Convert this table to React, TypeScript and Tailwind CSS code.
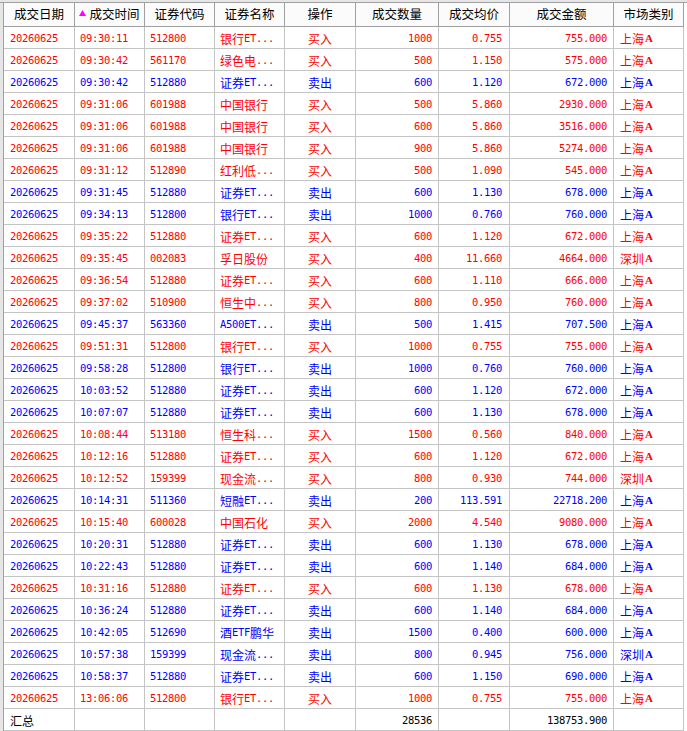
import React from "react";

// 成交记录（当日成交）
type Deal = {
  time: string;
  code: string;
  name: string;
  buy: boolean;
  qty: string;
  price: string;
  amount: string;
  market: string;
};

const deals: Deal[] = [
  { time: "09:30:11", code: "512800", name: "银行ET...", buy: true, qty: "1000", price: "0.755", amount: "755.000", market: "上海" },
  { time: "09:30:42", code: "561170", name: "绿色电...", buy: true, qty: "500", price: "1.150", amount: "575.000", market: "上海" },
  { time: "09:30:42", code: "512880", name: "证券ET...", buy: false, qty: "600", price: "1.120", amount: "672.000", market: "上海" },
  { time: "09:31:06", code: "601988", name: "中国银行", buy: true, qty: "500", price: "5.860", amount: "2930.000", market: "上海" },
  { time: "09:31:06", code: "601988", name: "中国银行", buy: true, qty: "600", price: "5.860", amount: "3516.000", market: "上海" },
  { time: "09:31:06", code: "601988", name: "中国银行", buy: true, qty: "900", price: "5.860", amount: "5274.000", market: "上海" },
  { time: "09:31:12", code: "512890", name: "红利低...", buy: true, qty: "500", price: "1.090", amount: "545.000", market: "上海" },
  { time: "09:31:45", code: "512880", name: "证券ET...", buy: false, qty: "600", price: "1.130", amount: "678.000", market: "上海" },
  { time: "09:34:13", code: "512800", name: "银行ET...", buy: false, qty: "1000", price: "0.760", amount: "760.000", market: "上海" },
  { time: "09:35:22", code: "512880", name: "证券ET...", buy: true, qty: "600", price: "1.120", amount: "672.000", market: "上海" },
  { time: "09:35:45", code: "002083", name: "孚日股份", buy: true, qty: "400", price: "11.660", amount: "4664.000", market: "深圳" },
  { time: "09:36:54", code: "512880", name: "证券ET...", buy: true, qty: "600", price: "1.110", amount: "666.000", market: "上海" },
  { time: "09:37:02", code: "510900", name: "恒生中...", buy: true, qty: "800", price: "0.950", amount: "760.000", market: "上海" },
  { time: "09:45:37", code: "563360", name: "A500ET...", buy: false, qty: "500", price: "1.415", amount: "707.500", market: "上海" },
  { time: "09:51:31", code: "512800", name: "银行ET...", buy: true, qty: "1000", price: "0.755", amount: "755.000", market: "上海" },
  { time: "09:58:28", code: "512800", name: "银行ET...", buy: false, qty: "1000", price: "0.760", amount: "760.000", market: "上海" },
  { time: "10:03:52", code: "512880", name: "证券ET...", buy: false, qty: "600", price: "1.120", amount: "672.000", market: "上海" },
  { time: "10:07:07", code: "512880", name: "证券ET...", buy: false, qty: "600", price: "1.130", amount: "678.000", market: "上海" },
  { time: "10:08:44", code: "513180", name: "恒生科...", buy: true, qty: "1500", price: "0.560", amount: "840.000", market: "上海" },
  { time: "10:12:16", code: "512880", name: "证券ET...", buy: true, qty: "600", price: "1.120", amount: "672.000", market: "上海" },
  { time: "10:12:52", code: "159399", name: "现金流...", buy: true, qty: "800", price: "0.930", amount: "744.000", market: "深圳" },
  { time: "10:14:31", code: "511360", name: "短融ET...", buy: false, qty: "200", price: "113.591", amount: "22718.200", market: "上海" },
  { time: "10:15:40", code: "600028", name: "中国石化", buy: true, qty: "2000", price: "4.540", amount: "9080.000", market: "上海" },
  { time: "10:20:31", code: "512880", name: "证券ET...", buy: false, qty: "600", price: "1.130", amount: "678.000", market: "上海" },
  { time: "10:22:43", code: "512880", name: "证券ET...", buy: false, qty: "600", price: "1.140", amount: "684.000", market: "上海" },
  { time: "10:31:16", code: "512880", name: "证券ET...", buy: true, qty: "600", price: "1.130", amount: "678.000", market: "上海" },
  { time: "10:36:24", code: "512880", name: "证券ET...", buy: false, qty: "600", price: "1.140", amount: "684.000", market: "上海" },
  { time: "10:42:05", code: "512690", name: "酒ETF鹏华", buy: false, qty: "1500", price: "0.400", amount: "600.000", market: "上海" },
  { time: "10:57:38", code: "159399", name: "现金流...", buy: false, qty: "800", price: "0.945", amount: "756.000", market: "深圳" },
  { time: "10:58:37", code: "512880", name: "证券ET...", buy: false, qty: "600", price: "1.150", amount: "690.000", market: "上海" },
  { time: "13:06:06", code: "512800", name: "银行ET...", buy: true, qty: "1000", price: "0.755", amount: "755.000", market: "上海" },
];

const headers = ["成交日期", "成交时间", "证券代码", "证券名称", "操作", "成交数量", "成交均价", "成交金额", "市场类别"];

// 每列宽度（含右边框）
const W = ["w-[71px]", "w-[70px]", "w-[70px]", "w-[70px]", "w-[71px]", "w-[83px]", "w-[71px]", "w-[104px]", "w-[70px]"];

const mono = "font-['DejaVu_Sans_Mono'] text-[10.5px] tracking-[-0.32px]";

// 半角字符用等宽字体，汉字用黑体
function Mixed({ text }: { text: string }) {
  const parts = text.match(/[\x00-\x7f]+|[^\x00-\x7f]+/g) ?? [];
  return (
    <>
      {parts.map((p, i) =>
        /^[\x00-\x7f]/.test(p) ? (
          <span key={i} className={mono}>{p}</span>
        ) : (
          <span key={i}>{p}</span>
        )
      )}
    </>
  );
}

const cell = "h-full flex items-center pt-[2px] border-r border-[#c4c4c4] whitespace-nowrap overflow-hidden";

export default function App() {
  return (
    <div className="w-[687px] h-[731px] overflow-hidden bg-white flex flex-col font-['Noto_Sans_CJK_SC',sans-serif] text-[12px] leading-none">
      <div className="h-[3px] shrink-0 bg-[#e6e6e6] border-b border-[#a0a0a0]" />
      <div className="flex flex-1">
        <div className="w-[4px] shrink-0 bg-[#e6e6e6] border-r border-[#a0a0a0]" />
        <div className="w-[680px] shrink-0">
          {/* 表头 */}
          <div className="flex h-[24px] border-b border-[#a0a0a0] bg-[#fbfbfb] text-black text-[12.5px]">
            {headers.map((h, i) => (
              <div key={h} className={`${W[i]} h-full flex items-center justify-center border-r border-[#a0a0a0]`}>
                {i === 1 && (
                  <svg width="7" height="6" viewBox="0 0 7 6" className="mr-[3px] -mt-[4px]">
                    <polygon points="3.5,0 7,6 0,6" fill="#ff00ff" />
                  </svg>
                )}
                {h}
              </div>
            ))}
          </div>

          {/* 成交明细 */}
          {deals.map((d, idx) => {
            const color = d.buy ? "text-[#ff0000]" : "text-[#0000ff]";
            return (
              <div key={idx} className={`flex h-[22px] border-b border-[#c4c4c4] ${color}`}>
                <div className={`${W[0]} ${cell} pl-[6px] ${mono}`}>20260625</div>
                <div className={`${W[1]} ${cell} pl-[5px] ${mono}`}>{d.time}</div>
                <div className={`${W[2]} ${cell} pl-[5px] ${mono}`}>{d.code}</div>
                <div className={`${W[3]} ${cell} pl-[5px]`}>
                  <Mixed text={d.name} />
                </div>
                <div className={`${W[4]} ${cell} justify-center`}>{d.buy ? "买入" : "卖出"}</div>
                <div className={`${W[5]} ${cell} justify-end pr-[6px] ${mono}`}>{d.qty}</div>
                <div className={`${W[6]} ${cell} justify-end pr-[7px] ${mono}`}>{d.price}</div>
                <div className={`${W[7]} ${cell} justify-end pr-[6px] ${mono}`}>{d.amount}</div>
                <div className={`${W[8]} ${cell} pl-[6px]`}>
                  {d.market}
                  <span className="font-['Liberation_Serif'] font-bold text-[11px] ml-[1px]">A</span>
                </div>
              </div>
            );
          })}

          {/* 汇总 */}
          <div className="flex h-[22px] border-b border-[#c4c4c4] text-black">
            <div className={`${W[0]} ${cell} pl-[6px]`}>汇总</div>
            <div className={`${W[1]} ${cell}`} />
            <div className={`${W[2]} ${cell}`} />
            <div className={`${W[3]} ${cell}`} />
            <div className={`${W[4]} ${cell}`} />
            <div className={`${W[5]} ${cell} justify-end pr-[6px] ${mono}`}>28536</div>
            <div className={`${W[6]} ${cell}`} />
            <div className={`${W[7]} ${cell} justify-end pr-[6px] ${mono}`}>138753.900</div>
            <div className={`${W[8]} ${cell}`} />
          </div>
        </div>
        <div className="flex-1" />
      </div>
    </div>
  );
}
